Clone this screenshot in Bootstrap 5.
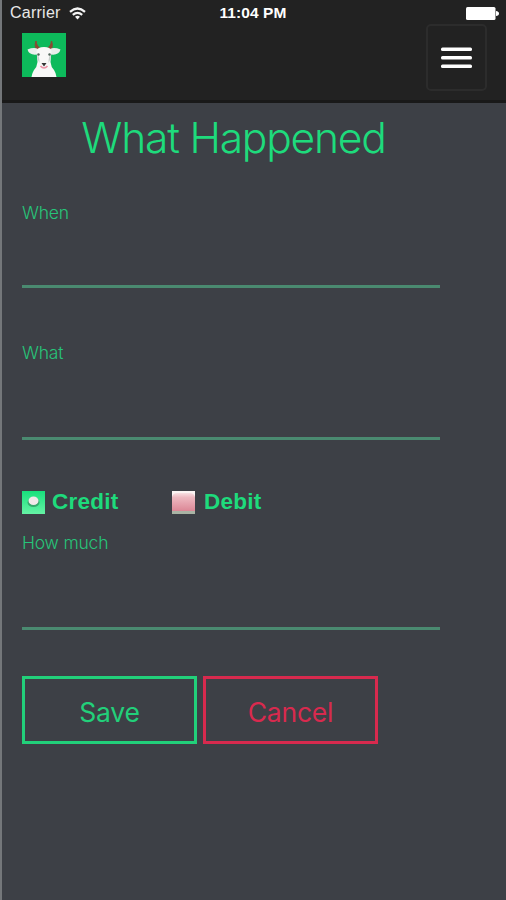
<!DOCTYPE html>
<html lang="en">
<head>
<meta charset="utf-8">
<meta name="viewport" content="width=device-width, initial-scale=1">
<title>What Happened</title>
<link href="https://cdn.jsdelivr.net/npm/bootstrap@5.3.0/dist/css/bootstrap.min.css" rel="stylesheet">
<style>
body{background:#3d4046;font-family:"Liberation Sans",Arial,sans-serif;color:#1fd078}
.screen{height:900px;border-left:2px solid #74777a;overflow:hidden}
.top-area{height:103px;background:#222;border-bottom:3px solid #191919}
.status{height:24px;padding:2px 7px 0 8px;color:#e8e8e8;font-size:16px;line-height:24px}
.status>*{flex:1 1 0}
.carrier{letter-spacing:.25px}
.clock{color:#fff;font-size:15.5px;font-weight:700;white-space:nowrap;letter-spacing:.1px;padding-right:3px}
.main-nav{height:76px;padding:0 19px 0 20px}
.logo{margin-top:9px}
.menu-btn{width:61px;height:67px;border:2px solid #2c2c2c;border-radius:5px;padding:0}
.form-area{padding:0 66px 0 20px}
.page-title{font-family:Inter,sans-serif;font-weight:300;font-size:42.5px;line-height:50px;margin:10px 0 0 5px;letter-spacing:-1.2px;white-space:nowrap;color:#1edb7c}
.field-label{display:block;font-family:Inter,sans-serif;font-weight:300;font-size:17.5px;line-height:24px;letter-spacing:-.2px;color:#27c479}
.line-input,.line-input:focus{background:transparent;border:0;border-bottom:3px solid #4a8a70;border-radius:0;box-shadow:none;padding:0;color:#1fd078}
.when-field{margin-top:38px}.when-field input{height:63px}
.what-field{margin-top:53px}.what-field input{height:75px}
.much-field{margin-top:15px}.much-field input{height:75px}
.choices{margin-top:48px;height:28px}
.choice{gap:7px;font-size:22.5px;line-height:28px;font-weight:700;color:#1edb7c;letter-spacing:.25px}
.credit{width:150px}
.debit{gap:9px}
.actions{gap:6px;margin-top:46px}
.act{width:175px;height:68px;border:3px solid;border-radius:0;font-family:Inter,sans-serif;font-size:26.5px;letter-spacing:-.2px;padding:5px 0 0;line-height:1}
.save{color:#22d07a;border-color:#22d07a}
.cancel{color:#d82a4e;border-color:#d82a4e}
</style>
<script src="https://cdn.jsdelivr.net/npm/bootstrap@5.3.0/dist/js/bootstrap.bundle.min.js"></script>
</head>
<body>
<div class="screen">
  <header class="top-area">
    <div class="status d-flex align-items-center">
      <div class="d-flex align-items-center"><span class="carrier">Carrier</span>
        <svg class="ms-2" width="17" height="13" viewBox="0 0 17 13" fill="none" stroke="#f4f4f4" stroke-width="2.2"><path d="M1 4.800Q8.500-1.800 16 4.800M3.800 7.900Q8.500 3.700 13.200 7.900"/><path d="M6 9.700Q8.500 7.800 11 9.700L8.500 12.400Z" fill="#f4f4f4" stroke="none"/></svg>
      </div>
      <div class="clock text-center">11:04 PM</div>
      <div class="d-flex justify-content-end"><svg width="33" height="13" viewBox="0 0 33 13" fill="#fff"><rect width="29.500" height="13" rx="1.5"/><path d="M30 4q3 .5 3 2.500t-3 2.500z"/></svg></div>
    </div>
    <nav class="main-nav d-flex justify-content-between align-items-start">
      <a class="logo d-flex" href="#" aria-label="Home">
        <svg width="44" height="44" viewBox="0 0 44 44"><path fill="#0dba5b" d="M0 0h44v44H0z"/><path d="M16.500 18C13 16 12.500 12 14 8c.5 4 2 6 5 8zM27 18c3.500-2 4-6 2.500-10-.5 4-2 6-5 8z" fill="#8b4932" stroke="#8b4932"/><path d="M16 16q-4-2-10.500.5Q7 22.500 15 21.500zM28 16q4-2 10.500.5Q37 22.500 29 21.500z" fill="#e9efeb"/><path d="M14.500 18q1-4 7.500-4t7.500 4L28.500 29q.5 5 3.500 8 2 3 2.500 7h-25q.5-4 2.500-7 3-3 3.500-8z" fill="#f8f8f7"/><path d="M15 20q2.500 3 2.500 10l-2-4zM29 20q-2.500 3-2.500 10l2-4z" fill="#c9d0cc"/><circle cx="16.500" cy="21.500" r="1.200" fill="#52665a"/><circle cx="27.500" cy="21.500" r="1.200" fill="#52665a"/><path d="M19.500 30h5L22 33.500z" fill="#343434"/><path d="M18.500 33q3.500 4 7 0" fill="none" stroke="#ec8fa5" stroke-width="1.600"/></svg>
      </a>
      <button class="btn menu-btn d-flex justify-content-center align-items-center" type="button" aria-label="Menu">
        <svg width="31" height="22" viewBox="0 0 31 22" fill="#fff"><rect y=".5" width="31" height="3.500" rx="1.5"/><rect y="9" width="31" height="3.500" rx="1.5"/><rect y="17.500" width="31" height="3.500" rx="1.5"/></svg>
      </button>
    </nav>
  </header>
  <form class="form-area">
    <h1 class="page-title text-center">What Happened</h1>
    <div class="when-field"><label class="field-label" for="when">When</label><input class="form-control line-input" id="when"></div>
    <div class="what-field"><label class="field-label" for="what">What</label><input class="form-control line-input" id="what"></div>
    <div class="choices d-flex">
      <label class="choice credit d-flex align-items-center">
        <svg width="23" height="23" viewBox="0 0 23 23"><defs><linearGradient id="g" x2="0" y2="1"><stop stop-color="#17e17c"/><stop offset="1" stop-color="#66f2a5"/></linearGradient><linearGradient id="p" x2="0" y2="1"><stop stop-color="#f8dfe2"/><stop offset=".25" stop-color="#edb8c0"/><stop offset="1" stop-color="#dc8796"/></linearGradient></defs><rect width="23" height="23" fill="url(#g)"/><ellipse cx="11.500" cy="11.500" rx="6" ry="4.500" fill="#36a96c"/><ellipse cx="11.500" cy="9.800" rx="5" ry="4.300" fill="#f1e8e9"/></svg>
        <span>Credit</span></label>
      <label class="choice debit d-flex align-items-center">
        <svg width="23" height="23" viewBox="0 0 23 23"><rect width="23" height="23" fill="#fbf4f3"/><path d="M0 20V6q1-4 5-4h13q4 0 5 4v14z" fill="url(#p)"/><path d="M0 20h23v3H0z" fill="#a9b3a4"/></svg>
        <span>Debit</span></label>
    </div>
    <div class="much-field"><label class="field-label" for="much">How much</label><input class="form-control line-input" id="much"></div>
    <div class="actions d-flex"><button type="button" class="btn act save">Save</button><button type="button" class="btn act cancel">Cancel</button></div>
  </form>
</div>
</body>
</html>
